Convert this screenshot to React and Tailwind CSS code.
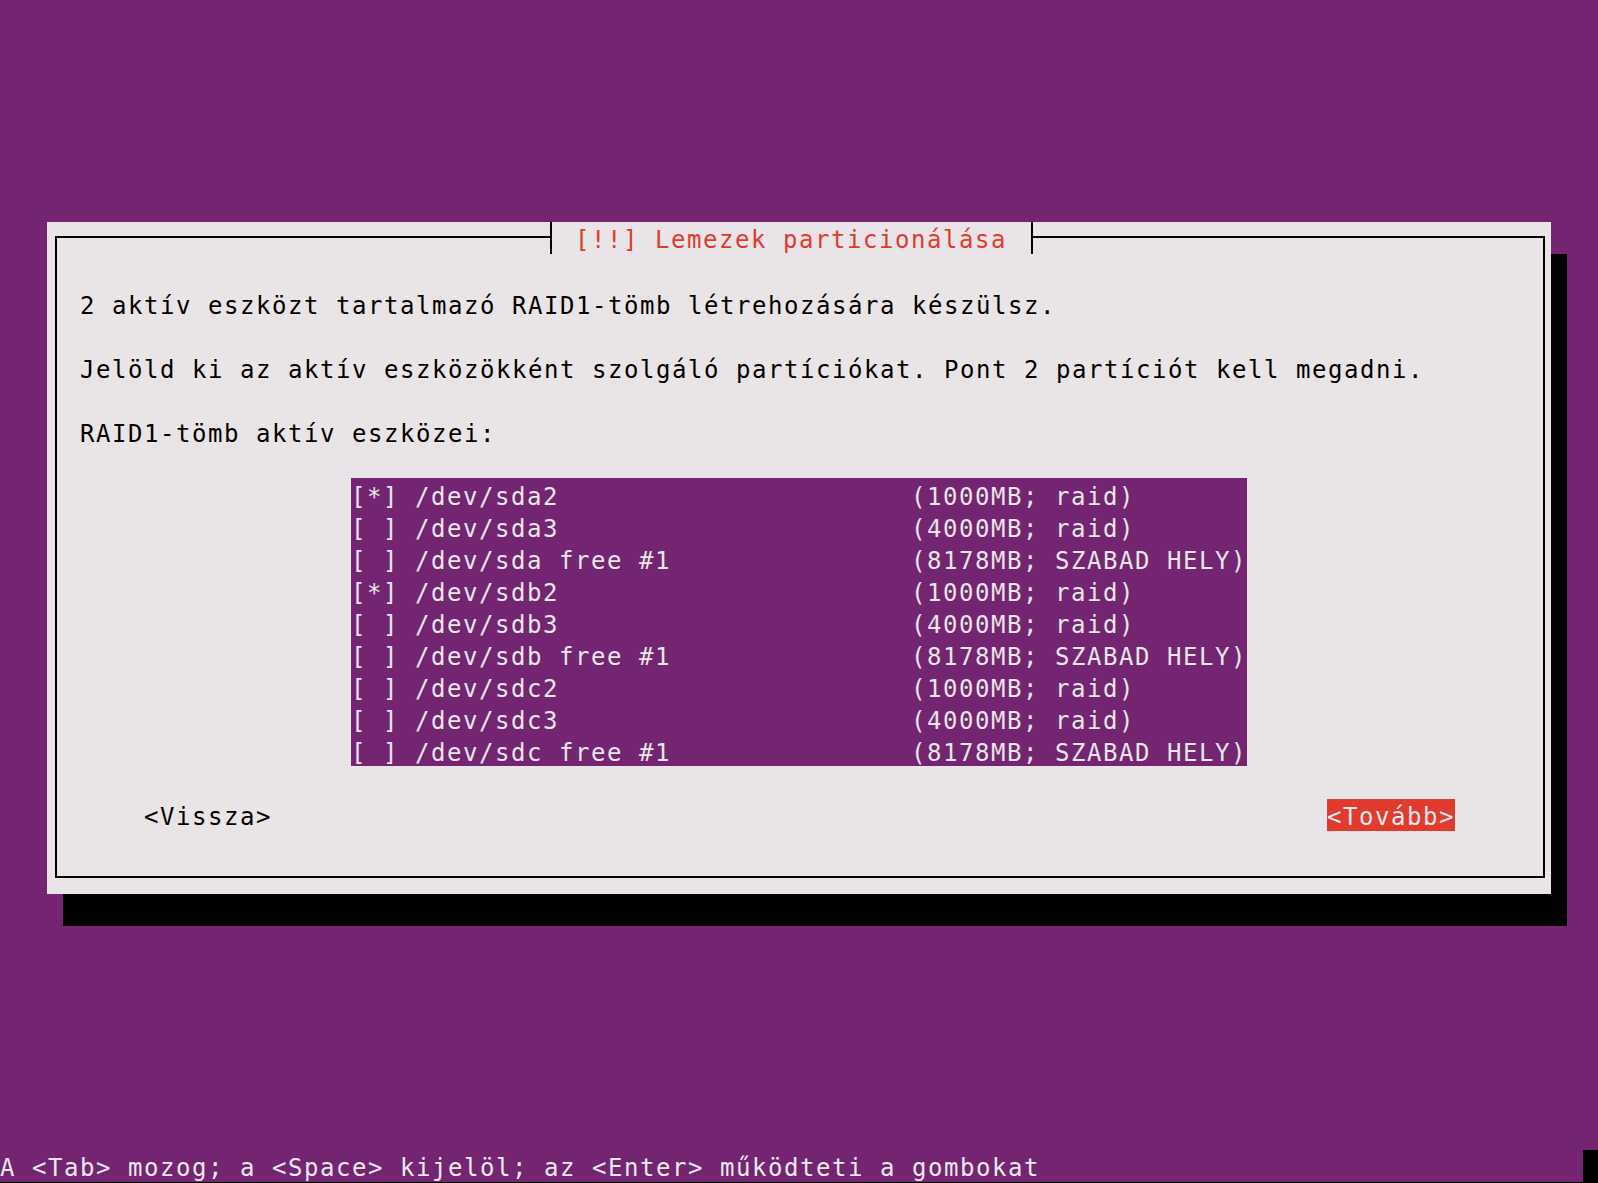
import React from "react";

const rows = [
  ["[*] /dev/sda2", "(1000MB; raid)"],
  ["[ ] /dev/sda3", "(4000MB; raid)"],
  ["[ ] /dev/sda free #1", "(8178MB; SZABAD HELY)"],
  ["[*] /dev/sdb2", "(1000MB; raid)"],
  ["[ ] /dev/sdb3", "(4000MB; raid)"],
  ["[ ] /dev/sdb free #1", "(8178MB; SZABAD HELY)"],
  ["[ ] /dev/sdc2", "(1000MB; raid)"],
  ["[ ] /dev/sdc3", "(4000MB; raid)"],
  ["[ ] /dev/sdc free #1", "(8178MB; SZABAD HELY)"],
];

function Line({ children, className = "" }) {
  return (
    <div className={"h-8 pt-[6px] leading-6 whitespace-pre " + className}>
      {children}
    </div>
  );
}

export default function App() {
  return (
    <div className="w-[1598px] h-[1183px] bg-[#742572] overflow-hidden flex flex-col font-['DejaVu_Sans_Mono',monospace] text-[24px] tracking-[1.551px]">
      <div className="h-[222px] shrink-0" />
      <div className="ml-[47px] w-[1504px] h-[672px] shrink-0 bg-[#e8e4e8] shadow-[16px_32px_0_0_#000] pt-[14px] pb-[16px] pl-[8px] pr-[6px] flex">
        <div className="relative flex-1 border-2 border-black flex flex-col text-black">
          <div className="absolute left-[493px] top-[-16px] w-[483px] h-8 bg-[#e8e4e8] border-x-2 border-black pl-[23px] pt-[6px] leading-6 whitespace-pre text-[#e03b2c]">
            [!!] Lemezek particionálása
          </div>
          <div className="mt-[50px] pl-[23px] flex flex-col">
            <Line>2 aktív eszközt tartalmazó RAID1-tömb létrehozására készülsz.</Line>
            <div className="h-8" />
            <Line>Jelöld ki az aktív eszközökként szolgáló partíciókat. Pont 2 partíciót kell megadni.</Line>
            <div className="h-8" />
            <Line>RAID1-tömb aktív eszközei:</Line>
          </div>
          <div className="mt-[30px] ml-[294px] w-[896px] bg-[#742572] text-[#e8e4e8] flex flex-col">
            {rows.map(([a, b], i) => (
              <div key={i} className="h-8 pt-[7px] leading-6 whitespace-pre flex">
                <span className="w-[560px] shrink-0">{a}</span>
                <span>{b}</span>
              </div>
            ))}
          </div>
          <div className="mt-[33px] flex">
            <Line className="ml-[87px] w-[128px]">{"<Vissza>"}</Line>
            <Line className="ml-auto mr-[88px] w-[128px] bg-[#e03b2c] text-[#ece8ec]">{"<Tovább>"}</Line>
          </div>
        </div>
      </div>
      <div className="flex-1" />
      <div className="h-8 shrink-0 flex text-[#ece8ec]">
        <Line>A &lt;Tab&gt; mozog; a &lt;Space&gt; kijelöl; az &lt;Enter&gt; működteti a gombokat</Line>
        <div className="ml-auto w-[15px] h-8 bg-black" />
      </div>
      <div className="h-px shrink-0 bg-black" />
    </div>
  );
}
